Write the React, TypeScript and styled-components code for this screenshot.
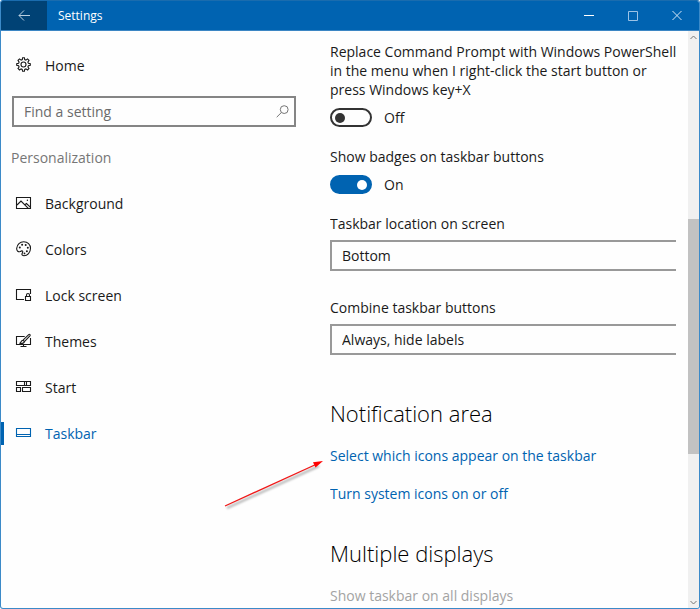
import React, { useState } from "react";
import styled, { createGlobalStyle } from "styled-components";

const ACCENT = "#0063b1";

const GlobalStyle = createGlobalStyle`
  * { box-sizing: border-box; }
  body {
    margin: 0;
    background: #fff;
    color: #1a1a1a;
    font: 14px/19px "Open Sans", "Noto Sans", sans-serif;
  }
  button, input, select { font: inherit; color: inherit; }
`;

const Window = styled.div`
  position: relative;
  display: flex;
  flex-direction: column;
  height: 100vh;
  overflow: hidden;
  border: 1px solid #3c8ac8;
  border-top-color: #1a6cae;
  border-radius: 3px;
  background: #fefefe;
`;

const TitleBar = styled.header`
  display: flex;
  flex: none;
  height: 30px;
  background: ${ACCENT};
  color: #fff;
  border-bottom: 1px solid #3c86c4;
`;

const BackButton = styled.button`
  display: grid;
  place-items: center;
  width: 46px;
  padding: 0;
  border: 0;
  background: #004275;
`;

const WindowTitle = styled.h1`
  flex: 1;
  margin: 0;
  padding-left: 11px;
  font-size: 12px;
  font-weight: 400;
  line-height: 29px;
`;

const WindowControls = styled.div`
  display: flex;
`;

const CaptionButton = styled.button`
  display: grid;
  place-items: center;
  width: 44px;
  padding: 0;
  border: 0;
  background: transparent;
`;

const Body = styled.div`
  display: grid;
  grid-template-columns: 329px 1fr 11px;
  flex: 1;
  min-height: 0;
`;

const Sidebar = styled.nav`
  overflow: hidden;
  padding-top: 11px;
`;

const NavItem = styled.a<{ $active?: boolean }>`
  display: flex;
  align-items: center;
  gap: 13px;
  height: 46px;
  padding-left: 14px;
  color: ${(p) => (p.$active ? ACCENT : "inherit")};
  text-decoration: none;
  background: ${(p) =>
    p.$active ? `linear-gradient(${ACCENT}, ${ACCENT}) left center / 3px 23px no-repeat` : "none"};
`;

const NavList = styled.ul`
  margin: 0;
  padding: 0;
  list-style: none;
`;

const SearchBox = styled.label`
  display: flex;
  align-items: center;
  height: 31px;
  margin: 8px 34px 0 11px;
  padding: 0 5px 0 10px;
  border: 2px solid #858585;
`;

const SearchInput = styled.input`
  flex: 1;
  min-width: 0;
  padding: 0;
  border: 0;
  outline: 0;
  background: transparent;
  &::placeholder { color: #6b6b6b; opacity: 1; }
`;

const Category = styled.h2`
  margin: 21px 0 13px 10px;
  color: #767676;
  font-size: 14px;
  font-weight: 400;
`;

const Content = styled.main`
  min-width: 0;
  overflow: hidden;
  padding-top: 11px;
`;

const Setting = styled.div`
  display: flex;
  flex-direction: column;
  gap: 9px;
  margin-bottom: 20px;
`;

const PickerSetting = styled(Setting)`
  gap: 7px;
  margin-bottom: 27px;
  padding-right: 12px;
`;

const SettingText = styled.div`
  white-space: pre-line;
`;

const ToggleLabel = styled.label`
  display: flex;
  align-items: center;
  gap: 12px;
`;

const Toggle = styled.input`
  appearance: none;
  display: flex;
  align-items: center;
  width: 42px;
  height: 19px;
  margin: 0;
  padding: 0 3px;
  border: 2px solid #333;
  border-radius: 10px;
  &::before {
    content: "";
    width: 10px;
    height: 10px;
    border-radius: 50%;
    background: #333;
  }
  &:checked {
    justify-content: flex-end;
    border-color: ${ACCENT};
    background: ${ACCENT};
  }
  &:checked::before { background: #fff; }
`;

const Picker = styled.select`
  appearance: none;
  width: 100%;
  height: 31px;
  padding: 0 10px;
  border: 2px solid #999;
  border-right: 0;
  border-radius: 0;
  background: #fefefe;
`;

const SectionTitle = styled.h2`
  margin: 0 0 18px;
  font-size: 22px;
  font-weight: 300;
  line-height: 30px;
  color: #000;
`;

const Section = styled.section`
  padding-top: 16px;
  margin-bottom: 19px;
`;

const SettingLink = styled.a`
  display: block;
  width: fit-content;
  margin-bottom: 19px;
  color: ${ACCENT};
  text-decoration: none;
`;

const DisabledLabel = styled.div`
  color: #a3a3a3;
`;

const ScrollTrack = styled.div`
  display: grid;
  grid-template-rows: 12px 176fr 236fr 142fr 12px;
  background: #f0f0f0;
`;

const ScrollButton = styled.button<{ $row: number }>`
  grid-row: ${(p) => p.$row};
  display: grid;
  place-items: center;
  padding: 0;
  border: 0;
  background: transparent;
`;

const ScrollThumb = styled.div`
  grid-row: 3;
  background: #c2c2c2;
`;

const Pointer = styled.svg`
  position: absolute;
  left: 220px;
  top: 454px;
  pointer-events: none;
`;

const Shadow = styled.path`
  filter: blur(1px);
`;

const Icon = ({ children }: { children: React.ReactNode }) => (
  <svg width="17" height="16" viewBox="0 0 17 16" fill="none" stroke="currentColor" strokeWidth="1.1" aria-hidden="true">
    {children}
  </svg>
);

const GearIcon = () => (
  <Icon>
    <path d="M7.3 2.6 7.6.7h1.8l.3 1.9 1.2.5 1.6-1.2 1.5 1.5-1.1 1.7.5 1.1 1.9.4v1.8l-1.9.3-.5 1.3 1.1 1.5-1.4 1.5-1.7-1.1-1.2.5-.3 1.9H7.6l-.4-1.9-1.1-.5L4.5 13 3 11.500 4.1 10l-.5-1.3-1.9-.4V6.600l1.9-.4.5-1.1L3 3.400l1.500-1.500 1.600 1.200z" />
    <circle cx="8.500" cy="7.500" r="2.500" />
  </Icon>
);

const PictureIcon = () => (
  <Icon>
    <path d="M1.5 2.5h14v11h-14z" />
    <path d="m2 10 4-4 7.3 7.3M9.8 9.7l1.7-1.2 4 3.8" />
    <circle cx="12.4" cy="5.3" r=".7" fill="currentColor" stroke="none" />
  </Icon>
);

const PaletteIcon = () => (
  <Icon>
    <path d="M1.7 7.2C2 3.4 5 .8 8.7.8c4 0 6.8 2.8 6.8 6.5 0 4.3-3.1 7.4-6.5 7.4-1.4 0-2.3-.8-2-1.8.3-.9 1-1.6.7-2.5-.4-1-1.5-.4-2.5.1-1.7.8-3.8-.5-3.5-3.3Z" />
    <g fill="currentColor" stroke="none">
      <circle cx="4.8" cy="6.6" r="1" />
      <circle cx="7.1" cy="3.8" r="1" />
      <circle cx="10.7" cy="4" r="1" />
      <circle cx="12.8" cy="6.8" r="1" />
      <circle cx="11.9" cy="10.2" r="1" />
      <circle cx="9.5" cy="12.4" r=".9" />
    </g>
  </Icon>
);

const LockScreenIcon = () => (
  <Icon>
    <path d="M9 12.5H1.5v-10h14V7" />
    <path d="M10.5 9.5h5v4h-5zM11.5 9.3V8a1.5 1.5 0 0 1 3 0v1.3" />
  </Icon>
);

const ThemesIcon = () => (
  <Icon>
    <path d="M9.7 3.5H1.5v8h14V5M8.5 11.5v2M5.5 13.5h6" />
    <path d="m8 7.2 5.7-5.6c1-.8 2 .2 1.2 1.2L9.4 8.6M8 7.2l1.4 1.4c-.2 1.8-2 2.2-4.9 1.9 1.7-.6 1.2-3 3.5-3.3Z" />
  </Icon>
);

const StartIcon = () => (
  <Icon>
    <path d="M1.5 2.5h8v4h-8zM9.5 2.5h2v4h-2zM11.5 2.5h4v4h-4zM1.5 8.5h4v4h-4zM7.5 8.5h8v4h-8z" />
  </Icon>
);

const TaskbarIcon = () => (
  <Icon>
    <path d="M1.5 3.5h14v8h-14zM1.5 9.5h14" />
  </Icon>
);

const NAV = [
  { label: "Background", icon: <PictureIcon /> },
  { label: "Colors", icon: <PaletteIcon /> },
  { label: "Lock screen", icon: <LockScreenIcon /> },
  { label: "Themes", icon: <ThemesIcon /> },
  { label: "Start", icon: <StartIcon /> },
  { label: "Taskbar", icon: <TaskbarIcon />, active: true },
];

function ToggleSetting({ label, id, initial }: { label: string; id: string; initial: boolean }) {
  const [on, setOn] = useState(initial);
  return (
    <Setting>
      <SettingText id={id}>{label}</SettingText>
      <ToggleLabel>
        <Toggle
          type="checkbox"
          role="switch"
          aria-labelledby={id}
          checked={on}
          onChange={(e) => setOn(e.target.checked)}
        />
        {on ? "On" : "Off"}
      </ToggleLabel>
    </Setting>
  );
}

function SelectSetting({ label, id, options }: { label: string; id: string; options: string[] }) {
  return (
    <PickerSetting>
      <label htmlFor={id}>{label}</label>
      <Picker id={id}>
        {options.map((o) => (
          <option key={o}>{o}</option>
        ))}
      </Picker>
    </PickerSetting>
  );
}

export default function App() {
  return (
    <>
      <GlobalStyle />
      <Window>
        <TitleBar>
          <BackButton aria-label="Back">
            <svg width="12" height="12" viewBox="0 0 12 12" fill="none" stroke="#b9cfe0">
              <path d="M12 5.5H1M6 .5l-5 5 5 5" />
            </svg>
          </BackButton>
          <WindowTitle>Settings</WindowTitle>
          <WindowControls>
            <CaptionButton aria-label="Minimize">
              <svg width="10" height="11" fill="none" stroke="#fff">
                <path d="M0 5.5h10" />
              </svg>
            </CaptionButton>
            <CaptionButton aria-label="Maximize">
              <svg width="10" height="11" fill="none" stroke="#9cc3e6">
                <path d="M.5 1.5h9v9h-9z" />
              </svg>
            </CaptionButton>
            <CaptionButton aria-label="Close">
              <svg width="10" height="11" fill="none" stroke="#d5e6f5">
                <path d="m.5 1 9 9m0-9-9 9" />
              </svg>
            </CaptionButton>
          </WindowControls>
        </TitleBar>
        <Body>
          <Sidebar>
            <NavItem href="#home">
              <GearIcon />
              Home
            </NavItem>
            <SearchBox>
              <SearchInput type="text" placeholder="Find a setting" aria-label="Find a setting" />
              <svg width="13" height="13" viewBox="0 0 13 13" fill="none" stroke="#757575" aria-hidden="true">
                <circle cx="8.2" cy="4.6" r="3.9" />
                <path d="M5.4 7.5.7 12.2" />
              </svg>
            </SearchBox>
            <Category>Personalization</Category>
            <NavList>
              {NAV.map((n) => (
                <li key={n.label}>
                  <NavItem href="#" $active={n.active} aria-current={n.active ? "page" : undefined}>
                    {n.icon}
                    {n.label}
                  </NavItem>
                </li>
              ))}
            </NavList>
          </Sidebar>
          <Content>
            <ToggleSetting
              id="powershell"
              initial={false}
              label={
                "Replace Command Prompt with Windows PowerShell\nin the menu when I right-click the start button or\npress Windows key+X"
              }
            />
            <ToggleSetting id="badges" initial label="Show badges on taskbar buttons" />
            <SelectSetting id="location" label="Taskbar location on screen" options={["Bottom", "Left", "Top", "Right"]} />
            <SelectSetting
              id="combine"
              label="Combine taskbar buttons"
              options={["Always, hide labels", "When taskbar is full", "Never"]}
            />
            <Section>
              <SectionTitle>Notification area</SectionTitle>
              <SettingLink href="#icons">Select which icons appear on the taskbar</SettingLink>
              <SettingLink href="#system">Turn system icons on or off</SettingLink>
            </Section>
            <Section>
              <SectionTitle>Multiple displays</SectionTitle>
              <DisabledLabel>Show taskbar on all displays</DisabledLabel>
            </Section>
          </Content>
          <ScrollTrack>
            <ScrollButton $row={1} aria-label="Scroll up">
              <svg width="7" height="5" fill="none" stroke="#777">
                <path d="m.5 4 3-3 3 3" />
              </svg>
            </ScrollButton>
            <ScrollThumb />
            <ScrollButton $row={5} aria-label="Scroll down">
              <svg width="7" height="5" fill="none" stroke="#777">
                <path d="m.5 1 3 3 3-3" />
              </svg>
            </ScrollButton>
          </ScrollTrack>
        </Body>
        <Pointer width="110" height="60" viewBox="0 0 110 60" aria-hidden="true">
          <Shadow d="M6 53 98 11" stroke="#000" strokeOpacity=".3" strokeWidth="2" />
          <path d="M4 51 97 8.5" stroke="#f01818" strokeWidth="1.3" />
          <path d="m102 6-7.5 6.500-2.5-5.200z" fill="#f00" />
        </Pointer>
      </Window>
    </>
  );
}
